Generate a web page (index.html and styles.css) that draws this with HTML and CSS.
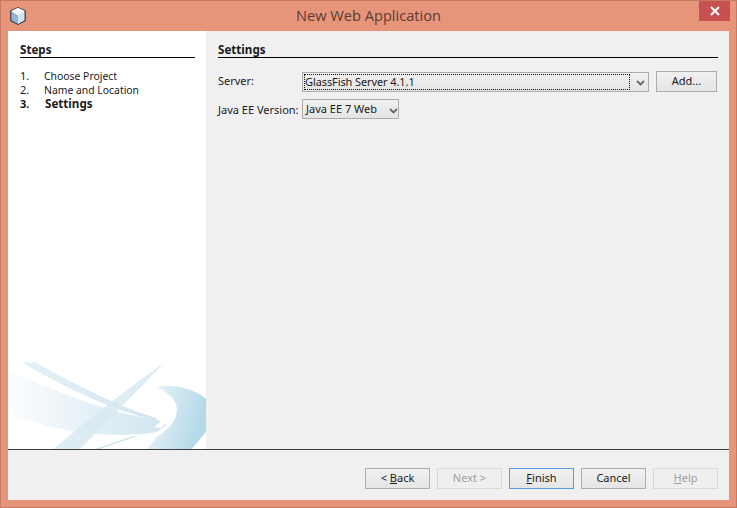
FILE: index.html
```html
<!DOCTYPE html>
<html lang="en">
<head>
    <meta charset="UTF-8">
    <meta name="viewport" content="width=device-width, initial-scale=1.0">
    <title>New Web Application</title>
    <link rel="stylesheet" href="styles.css">
</head>
<body>
    <div class="window">
        <div class="titlebar">
            <svg class="app-icon" width="16" height="18" viewBox="0 0 16 18">
                <path d="M8 .8 15 4v9.6L8 17.2 1 13.6V4z" fill="#dfe9f2" stroke="#26323e" stroke-width="1.4" stroke-linejoin="round"/>
                <path d="M8 8.4 15 4 8 .8 1 4z" fill="#f4f8fb"/>
                <path d="M8 8.4V17L1.6 13.4V4.6z" fill="#8fb6d6"/>
                <path d="M8 8.4V17l6.4-3.6V4.6z" fill="#d5e4f0"/>
            </svg>
            <span class="title">New Web Application</span>
            <div class="close">
                <svg width="10" height="10" viewBox="0 0 10 10">
                    <path d="M1 1l8 8M9 1 1 9" stroke="#fff" stroke-width="2"/>
                </svg>
            </div>
        </div>
        <div class="content">
            <div class="main">
                <div class="side">
                    <h2 class="side-title">Steps</h2>
                    <ol class="steps">
                        <li><span class="num">1.</span>Choose Project</li>
                        <li><span class="num">2.</span>Name and Location</li>
                        <li class="current"><span class="num">3.</span>Settings</li>
                    </ol>
                    <svg class="swoosh" width="198" height="87" viewBox="24 36 594 261">
                        <defs>
                            <linearGradient id="fadeLeft" x1="0" y1="0" x2="1" y2="0">
                                <stop offset="0" stop-color="#fbfdfe"/>
                                <stop offset="1" stop-color="#cfe5ef"/>
                            </linearGradient>
                            <linearGradient id="fadeThin" x1="0" y1="0" x2="1" y2="0">
                                <stop offset="0" stop-color="#e6f1f6"/>
                                <stop offset="1" stop-color="#d2e6ef"/>
                            </linearGradient>
                            <linearGradient id="fadeRight" x1="0" y1="0" x2="1" y2="0.3">
                                <stop offset="0" stop-color="#f0f7fa"/>
                                <stop offset="1" stop-color="#b4d9e9"/>
                            </linearGradient>
                        </defs>
                        <path d="M24 62C180 130 330 190 470 208L500 225 470 246C350 268 170 250 24 190z" fill="url(#fadeLeft)"/>
                        <path d="M64 37H106C200 90 330 160 470 205L460 210C320 175 180 105 64 37z" fill="url(#fadeThin)"/>
                        <path d="M495 37 240 297H160C270 205 390 110 495 37z" fill="#d6e8f1" opacity=".8"/>
                        <path d="M470 110C530 100 585 120 618 146V245L575 297H440L470 262C510 235 535 205 530 170 525 145 500 125 470 110z" fill="url(#fadeRight)"/>
                        <path d="M462 232 525 175 530 186 484 234zM285 297 400 258H422L312 297zM360 297 430 262H466L390 297z" fill="#fff"/>
                        <path d="M285 297 400 258H412L300 297z" fill="#cfe4ee"/>
                    </svg>
                </div>
                <div class="panel">
                    <h2 class="panel-title">Settings</h2>
                    <div class="form-row server-row">
                        <label class="field-label">Server:</label>
                        <div class="combo combo-wide">
                            <span class="combo-text">GlassFish Server 4.1.1</span>
                            <svg class="chevron" width="9" height="6" viewBox="0 0 9 6"><path d="M1 1l3.5 3.5L8 1" fill="none" stroke="#666" stroke-width="1.8"/></svg>
                        </div>
                        <button class="btn btn-add">Add...</button>
                    </div>
                    <div class="form-row">
                        <label class="field-label"><u>J</u>ava EE Version:</label>
                        <div class="combo combo-small">
                            <span class="combo-value">Java EE 7 Web</span>
                            <svg class="chevron" width="9" height="6" viewBox="0 0 9 6"><path d="M1 1l3.5 3.5L8 1" fill="none" stroke="#666" stroke-width="1.8"/></svg>
                        </div>
                    </div>
                </div>
            </div>
            <div class="footer">
                <button class="btn">&lt; <u>B</u>ack</button>
                <button class="btn" disabled>Next &gt;</button>
                <button class="btn btn-default"><u>F</u>inish</button>
                <button class="btn">Cancel</button>
                <button class="btn" disabled><u>H</u>elp</button>
            </div>
        </div>
    </div>
</body>
</html>
```

FILE: styles.css
```css
html, body {
    margin: 0;
    padding: 0;
}
body {
    font-family: "Noto Sans", Arial, sans-serif;
    font-size: 11px;
    color: #1a1a1a;
}
.window {
    width: 737px;
    height: 508px;
    box-sizing: border-box;
    display: flex;
    flex-direction: column;
    background: #e6957b;
    border: 1px solid #c27a62;
    padding: 0 7px 7px;
}
.titlebar {
    height: 30px;
    flex: none;
    display: flex;
    justify-content: center;
    position: relative;
}
.app-icon {
    position: absolute;
    left: 2px;
    top: 6px;
}
.title {
    font-family: "Open Sans", sans-serif;
    font-size: 14.6px;
    line-height: 28px;
    color: #5a3c33;
}
.close {
    position: absolute;
    right: -1px;
    top: 0;
    width: 31px;
    height: 20px;
    background: #c75050;
    display: flex;
    align-items: center;
    justify-content: center;
}
.content {
    flex: 1;
    display: flex;
    flex-direction: column;
    background: #f0f0f0;
}
.main {
    flex: 1;
    display: flex;
    border-bottom: 1px solid #3c3c3c;
}
.side {
    width: 198px;
    background: white;
    display: flex;
    flex-direction: column;
    padding-top: 12px;
}
.side-title, .panel-title {
    font-size: 11.6px;
    font-weight: bold;
    line-height: 14px;
    margin: 0;
    border-bottom: 1px solid black;
}
.side-title {
    margin: 0 11px 0 12px;
}
.steps {
    list-style: none;
    margin: 11px 0 0 12px;
    padding: 0;
}
.steps li {
    font-size: 10.4px;
    line-height: 14px;
}
.steps .num {
    display: inline-block;
    width: 24px;
    font-size: 11px;
}
.steps .current {
    font-size: 11.6px;
    font-weight: bold;
}
.steps .current .num {
    width: 25px;
}
.swoosh {
    margin-top: auto;
    display: block;
}
.panel {
    flex: 1;
    padding: 12px 11px 0 12px;
}
.panel-title {
    margin-bottom: 13px;
}
.form-row {
    display: flex;
    align-items: center;
    margin-bottom: 8px;
}
.server-row {
    margin-bottom: 7px;
}
.server-row .field-label {
    padding-bottom: 2px;
}
.field-label {
    width: 84px;
    flex: none;
}
.combo {
    height: 20px;
    box-sizing: border-box;
    border: 1px solid #acacac;
    background: linear-gradient(#f0f0f0, #e5e5e5);
    display: flex;
    align-items: center;
}
.combo-wide {
    width: 347px;
    padding-left: 1px;
}
.combo-wide .chevron {
    margin-top: 2px;
}
.combo-small {
    width: 97px;
    padding-left: 3px;
}
.combo-small .chevron {
    margin-top: 4px;
}
.combo-text {
    width: 326px;
    height: 16px;
    line-height: 13px;
    box-sizing: border-box;
    border: 1px dotted #111;
    letter-spacing: -.1px;
}
.combo-value {
    width: 81px;
    padding-bottom: 2px;
}
.chevron {
    margin-left: 6px;
    flex: none;
}
.btn {
    width: 65px;
    height: 21px;
    padding: 0 0 2px;
    box-sizing: border-box;
    font-family: inherit;
    font-size: 11px;
    color: #1a1a1a;
    border: 1px solid #acacac;
    background: linear-gradient(#f0f0f0, #e5e5e5);
}
.btn:disabled {
    color: #a0a0a0;
    border-color: #d9d9d9;
    background: #efefef;
}
.btn-default {
    border-color: #569de5;
}
.btn-add {
    width: 61px;
    margin-left: 7px;
}
.footer {
    height: 50px;
    flex: none;
    display: flex;
    justify-content: flex-end;
    gap: 7px;
    padding: 18px 11px 0 0;
    box-sizing: border-box;
}
```
